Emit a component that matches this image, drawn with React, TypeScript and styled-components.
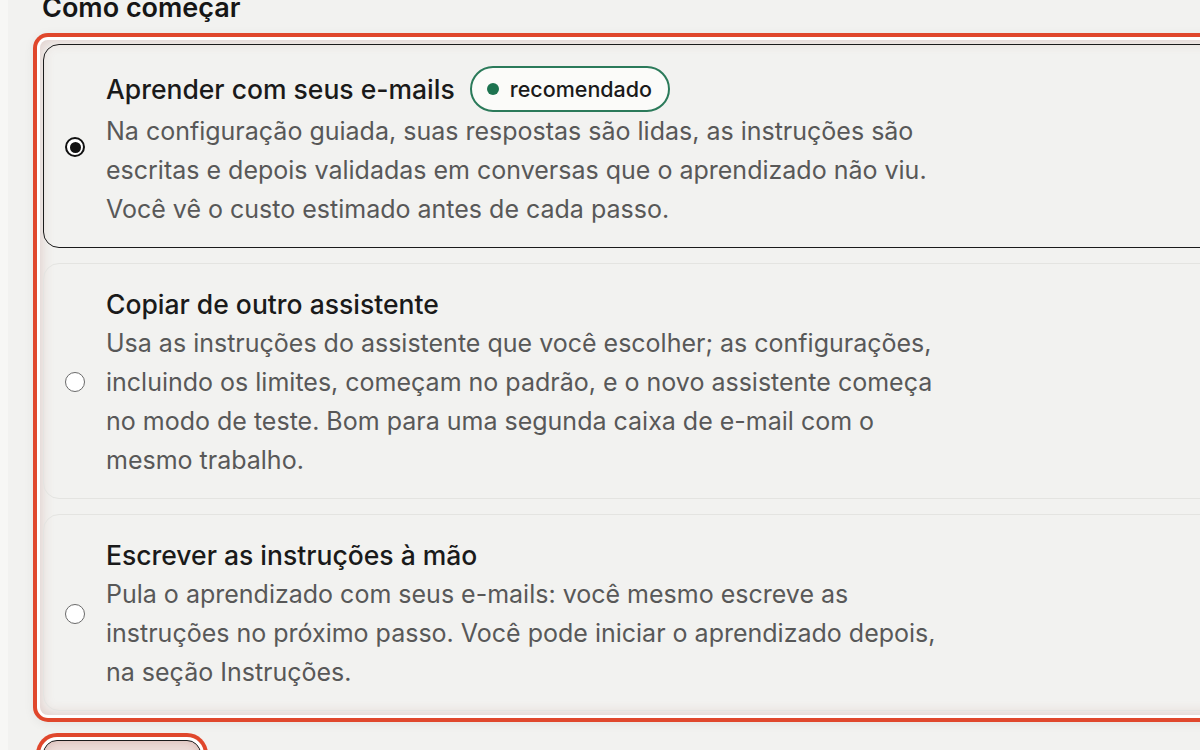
import React from 'react'
import styled, { createGlobalStyle } from 'styled-components'

const GlobalStyle = createGlobalStyle`
  html, body {
    margin: 0;
    padding: 0;
    overflow: hidden;
    background: #f7f7f5;
  }
  body {
    font-family: Inter, "Noto Sans", sans-serif;
    -webkit-font-smoothing: antialiased;
  }
`

const Page = styled.div`
  margin-left: 8px;
  min-height: 750px;
  background: #f2f2f0;
  padding: 0 0 0 32px;
  overflow: hidden;
`

const Heading = styled.h2`
  margin: -9px 0 15px 2px;
  font-size: 27px;
  line-height: 34px;
  font-weight: 600;
  color: #161616;
`

const Group = styled.div`
  display: flex;
  flex-direction: column;
  gap: 15px;
  width: 1300px;
  padding: 4px 0 4px 3px;
  border-radius: 8px;
  background: #f2f2f0;
  box-shadow:
    0 0 0 3px #ffffff,
    0 0 0 7px #e0472c,
    0 2px 12px 6px rgba(0, 0, 0, 0.07),
    inset 0 0 14px rgba(170, 90, 80, 0.28);
`

const Card = styled.label<{ $selected?: boolean }>`
  display: flex;
  align-items: center;
  gap: 21px;
  padding: 20px 0 18px 21px;
  border-radius: 16px;
  border: 1.5px solid ${(p) => (p.$selected ? '#1b1b1b' : '#e4e4e1')};
  background: transparent;
  cursor: pointer;
`

const Radio = styled.span<{ $checked?: boolean }>`
  flex: none;
  box-sizing: border-box;
  width: 20px;
  height: 20px;
  border-radius: 50%;
  background: #ffffff;
  border: ${(p) => (p.$checked ? '2px solid #111' : '1.5px solid #6a6a6a')};
  display: flex;
  align-items: center;
  justify-content: center;

  &::after {
    content: '';
    display: ${(p) => (p.$checked ? 'block' : 'none')};
    width: 11px;
    height: 11px;
    border-radius: 50%;
    background: #111;
  }
`

const Content = styled.div`
  display: flex;
  flex-direction: column;
`

const TitleRow = styled.div<{ $tall?: boolean }>`
  display: flex;
  align-items: center;
  gap: 15px;
  min-height: ${(p) => (p.$tall ? '47px' : '40px')};
`

const Title = styled.span`
  font-size: 26.5px;
  line-height: 40px;
  font-weight: 500;
  color: #1a1a1a;
`

const Badge = styled.span`
  display: inline-flex;
  align-items: center;
  gap: 11px;
  box-sizing: border-box;
  height: 46px;
  padding: 0 16px 0 15px;
  border: 2px solid #2b7a5a;
  border-radius: 999px;
  background: #fbfbf9;
  font-size: 21.5px;
  font-weight: 500;
  color: #1a1a1a;

  &::before {
    content: '';
    width: 12px;
    height: 12px;
    border-radius: 50%;
    background: #1d7350;
  }
`

const Description = styled.p`
  margin: 0;
  max-width: 836px;
  font-size: 25px;
  line-height: 39px;
  color: #585858;
`

const ButtonRow = styled.div`
  display: flex;
  margin-top: 25px;
  padding-left: 3px;
`

const Button = styled.button`
  box-sizing: border-box;
  width: 158px;
  height: 56px;
  border-radius: 14px;
  border: 1.5px solid #1b1b1b;
  background: #ecdcd8;
  box-shadow:
    0 0 0 3px #ffffff,
    0 0 0 7px #e0472c,
    inset 0 0 10px rgba(170, 90, 80, 0.3);
`

const options = [
  {
    id: 'learn',
    title: 'Aprender com seus e-mails',
    recommended: true,
    text: 'Na configuração guiada, suas respostas são lidas, as instruções são escritas e depois validadas em conversas que o aprendizado não viu. Você vê o custo estimado antes de cada passo.',
  },
  {
    id: 'copy',
    title: 'Copiar de outro assistente',
    text: 'Usa as instruções do assistente que você escolher; as configurações, incluindo os limites, começam no padrão, e o novo assistente começa no modo de teste. Bom para uma segunda caixa de e-mail com o mesmo trabalho.',
  },
  {
    id: 'manual',
    title: 'Escrever as instruções à mão',
    text: 'Pula o aprendizado com seus e-mails: você mesmo escreve as instruções no próximo passo. Você pode iniciar o aprendizado depois, na seção Instruções.',
  },
]

export default function App(): JSX.Element {
  const [choice, setChoice] = React.useState('learn')
  return (
    <>
      <GlobalStyle />
      <Page>
        <Heading>Como começar</Heading>
        <Group role="radiogroup">
          {options.map((o) => (
            <Card key={o.id} $selected={choice === o.id} onClick={() => setChoice(o.id)}>
              <Radio $checked={choice === o.id} />
              <Content>
                <TitleRow $tall={o.recommended}>
                  <Title>{o.title}</Title>
                  {o.recommended && <Badge>recomendado</Badge>}
                </TitleRow>
                <Description>{o.text}</Description>
              </Content>
            </Card>
          ))}
        </Group>
        <ButtonRow>
          <Button aria-label="Voltar" />
        </ButtonRow>
      </Page>
    </>
  )
}
